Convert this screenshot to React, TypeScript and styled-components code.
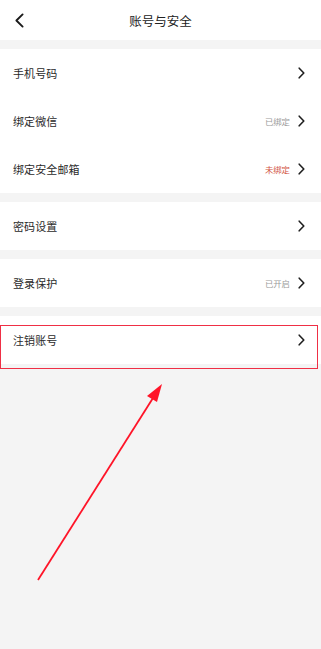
import { createGlobalStyle, styled } from "styled-components";

const GlobalStyle = createGlobalStyle`
  html, body {
    margin: 0;
    padding: 0;
    background: #f4f4f4;
  }
  body {
    font-family: "Noto Sans CJK SC", "Noto Sans", sans-serif;
    -webkit-font-smoothing: antialiased;
  }
`;

const Page = styled.div`
  position: relative;
  width: 321px;
  min-height: 649px;
  background: #f4f4f4;
  overflow: hidden;
`;

const Header = styled.header`
  height: 40px;
  background: #fff;
  display: grid;
  grid-template-columns: 40px 1fr 40px;
  align-items: center;
  margin-bottom: 9px;
`;

const BackButton = styled.button`
  border: 0;
  background: none;
  padding: 0 0 0 14px;
  height: 40px;
  display: flex;
  align-items: center;
`;

const Title = styled.h1`
  margin: 0;
  text-align: center;
  font-size: 12.5px;
  font-weight: 400;
  color: #222;
  line-height: 40px;
  padding-top: 1px;
`;

const Group = styled.section`
  background: #fff;
  margin-bottom: 9px;
`;

const Row = styled.div`
  height: 48px;
  display: flex;
  align-items: center;
  padding: 0 16px 0 13px;
`;

const Label = styled.span`
  flex: 1;
  font-size: 11px;
  color: #2a2a2a;
  letter-spacing: 0.1px;
`;

const Status = styled.span<{ $alert?: boolean }>`
  font-size: 8.4px;
  color: ${(p) => (p.$alert ? "#d2543f" : "#9a9a9a")};
  margin-right: 8px;
`;

const Highlight = styled.div`
  position: absolute;
  left: 0;
  top: 325px;
  width: 318px;
  height: 44px;
  box-sizing: border-box;
  border: 1.5px solid #ef2f45;
  pointer-events: none;
`;

const Annotation = styled.svg`
  position: absolute;
  left: 0;
  top: 0;
  pointer-events: none;
`;

function Chevron() {
  return (
    <svg width="7" height="12" viewBox="0 0 7 12">
      <path
        d="M1.2 1.2 L5.8 6 L1.2 10.8"
        fill="none"
        stroke="#1f1f1f"
        strokeWidth="1.6"
        strokeLinecap="round"
        strokeLinejoin="round"
      />
    </svg>
  );
}

function BackIcon() {
  return (
    <svg width="11" height="15" viewBox="0 0 11 15">
      <path
        d="M8.6 1.4 L2.4 7.5 L8.6 13.6"
        fill="none"
        stroke="#1a1a1a"
        strokeWidth="1.9"
        strokeLinecap="round"
        strokeLinejoin="round"
      />
    </svg>
  );
}

type Item = { label: string; status?: string; alert?: boolean };

const groups: Item[][] = [
  [
    { label: "手机号码" },
    { label: "绑定微信", status: "已绑定" },
    { label: "绑定安全邮箱", status: "未绑定", alert: true },
  ],
  [{ label: "密码设置" }],
  [{ label: "登录保护", status: "已开启" }],
  [{ label: "注销账号" }],
];

export default function App() {
  return (
    <Page>
      <GlobalStyle />
      <Header>
        <BackButton aria-label="返回">
          <BackIcon />
        </BackButton>
        <Title>账号与安全</Title>
        <span />
      </Header>
      {groups.map((group, gi) => (
        <Group key={gi}>
          {group.map((item) => (
            <Row key={item.label}>
              <Label>{item.label}</Label>
              {item.status && <Status $alert={item.alert}>{item.status}</Status>}
              <Chevron />
            </Row>
          ))}
        </Group>
      ))}
      <Highlight />
      <Annotation width="321" height="649" viewBox="0 0 321 649">
        <line x1="38" y1="580" x2="153" y2="398" stroke="#ff1428" strokeWidth="1.8" />
        <polygon points="162,384 147,396 157,402" fill="#ff1428" />
      </Annotation>
    </Page>
  );
}
